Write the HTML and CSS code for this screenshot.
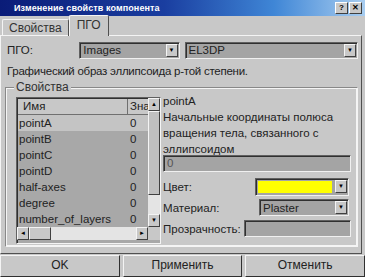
FILE: index.html
```html
<!DOCTYPE html>
<html lang="ru">
  <head>
    <meta charset="UTF-8" />
    <title>Изменение свойств компонента</title>
    <link rel="stylesheet" href="styles.css">
  </head>
  <body>
    <div class="window">
      <div class="titlebar">
        <span class="title">Изменение свойств компонента</span>
        <div class="caption-btns">
          <span class="cap-btn">?</span>
          <span class="cap-btn">✕</span>
        </div>
      </div>

      <div class="tabs">
        <div class="tab">Свойства</div>
        <div class="tab active">ПГО</div>
      </div>

      <div class="panel">
        <div class="pgo-row">
          <span class="pgo-label">ПГО:</span>
          <div class="combo combo-images"><span class="combo-text">Images</span><span class="drop">▼</span></div>
          <div class="combo combo-el"><span class="combo-text">EL3DP</span><span class="drop">▼</span></div>
        </div>
        <div class="desc">Графический образ эллипсоида p-той степени.</div>

        <div class="group">
          <span class="group-label">Свойства</span>
          <div class="group-body">
            <div class="list">
              <div class="list-main">
                <div class="list-cols">
                  <div class="list-head">
                    <span class="col-name">Имя</span>
                    <span class="col-val">Зна</span>
                  </div>
                  <div class="list-row first"><span class="col-name">pointA</span><span class="col-val">0</span></div>
                  <div class="list-row"><span class="col-name">pointB</span><span class="col-val">0</span></div>
                  <div class="list-row"><span class="col-name">pointC</span><span class="col-val">0</span></div>
                  <div class="list-row"><span class="col-name">pointD</span><span class="col-val">0</span></div>
                  <div class="list-row"><span class="col-name">half-axes</span><span class="col-val">0</span></div>
                  <div class="list-row"><span class="col-name">degree</span><span class="col-val">0</span></div>
                  <div class="list-row"><span class="col-name">number_of_layers</span><span class="col-val">0</span></div>
                </div>
                <div class="vscroll">
                  <span class="arrow">▲</span>
                  <span class="vthumb"></span>
                  <span class="vtrack"></span>
                  <span class="arrow">▼</span>
                </div>
              </div>
              <div class="hscroll">
                <span class="arrow">◄</span>
                <span class="hthumb"></span>
                <span class="htrack"></span>
                <span class="arrow">►</span>
                <span class="corner"></span>
              </div>
            </div>

            <div class="details">
              <div class="prop-name">pointA</div>
              <div class="prop-desc">Начальные координаты полюса вращения тела, связанного с эллипсоидом</div>
              <div class="field field-value">0</div>
              <div class="detail-row row-color">
                <span class="detail-label">Цвет:</span>
                <div class="combo combo-color"><span class="swatch"></span><span class="drop">▼</span></div>
              </div>
              <div class="detail-row">
                <span class="detail-label">Материал:</span>
                <div class="combo combo-mat"><span class="combo-text">Plaster</span><span class="drop">▼</span></div>
              </div>
              <div class="detail-row">
                <span class="detail-label">Прозрачность:</span>
                <div class="field field-alpha"></div>
              </div>
            </div>
          </div>
        </div>
      </div>

      <div class="buttons">
        <div class="btn">OK</div>
        <div class="btn">Применить</div>
        <div class="btn">Отменить</div>
      </div>
    </div>
  </body>
</html>
```

FILE: styles.css
```css
html,
body {
  margin: 0;
  padding: 0;
  background: #c8c8c8;
}

.window {
  width: 365px;
  height: 277px;
  background: #c8c8c8;
  font-family: "Liberation Sans", Arial, sans-serif;
  font-size: 11.5px;
  color: #1a1a1a;
  display: flex;
  flex-direction: column;
  overflow: hidden;
}

/* title bar */
.titlebar {
  height: 16px;
  flex: none;
  background: linear-gradient(90deg, #0a1c78 0%, #1a3ea0 45%, #3f86d6 75%, #a8cdf0 100%);
  display: flex;
  align-items: center;
  justify-content: space-between;
  padding: 0 3px 0 14px;
}

.title {
  color: #fff;
  font-weight: bold;
  font-size: 9px;
  letter-spacing: 0.1px;
}

.caption-btns {
  display: flex;
  gap: 1px;
}

.cap-btn {
  width: 11px;
  height: 10px;
  background: #c8c8c8;
  border: 1px solid;
  border-color: #fff #404040 #404040 #fff;
  font-size: 8px;
  font-weight: bold;
  line-height: 10px;
  text-align: center;
  color: #000;
}

/* tabs */
.tabs {
  height: 19px;
  flex: none;
  display: flex;
  align-items: flex-end;
  padding-left: 2px;
  position: relative;
  z-index: 1;
}

.tab {
  height: 16px;
  padding: 0 6px;
  border: 1px solid;
  border-color: #f4f4f4 #505050 transparent #f4f4f4;
  border-bottom: none;
  border-radius: 2px 2px 0 0;
  font-size: 12px;
  line-height: 16px;
  color: #333;
  margin-bottom: -1px;
}

.tab.active {
  height: 20px;
  line-height: 18px;
  padding: 0 7px;
  background: #c8c8c8;
}

/* tab panel */
.panel {
  flex: 1;
  margin: 0 3px 0 0;
  border: 1px solid;
  border-color: #f4f4f4 #505050 #505050 #f4f4f4;
  padding: 5px 3px 0 6px;
  display: flex;
  flex-direction: column;
}

.pgo-row {
  display: flex;
  align-items: center;
  height: 18px;
}

.pgo-label {
  width: 73px;
  color: #222;
}

.combo {
  height: 17px;
  box-sizing: border-box;
  background: #a4a4a4;
  border: 1px solid;
  border-color: #606060 #f0f0f0 #f0f0f0 #606060;
  box-shadow: inset 1px 1px 0 #303030;
  display: flex;
  align-items: center;
}

.combo-text {
  flex: 1;
  padding-left: 3px;
  color: #222;
}

.drop {
  width: 12px;
  height: 13px;
  margin-right: 1px;
  background: #c8c8c8;
  border: 1px solid;
  border-color: #f4f4f4 #404040 #404040 #f4f4f4;
  box-sizing: border-box;
  font-size: 6px;
  line-height: 11px;
  text-align: center;
  color: #000;
}

.combo-images {
  width: 101px;
}

.combo-el {
  width: 175px;
  margin-left: 5px;
}

.desc {
  margin-top: 4px;
  height: 16px;
  line-height: 16px;
  letter-spacing: -0.25px;
  color: #222;
}

/* group box */
.group {
  position: relative;
  margin: 8px 0 0 -2px;
  border: 1px solid;
  border-color: #888 #f4f4f4 #f4f4f4 #888;
  outline: 1px solid #f4f4f4;
  outline-offset: -2px;
  height: 160px;
  padding: 9px 8px 0 10px;
  box-sizing: border-box;
}

.group-label {
  position: absolute;
  top: -8px;
  left: 8px;
  padding: 0 2px;
  background: #c8c8c8;
  font-size: 12px;
  line-height: 14px;
  color: #333;
}

.group-body {
  display: flex;
  gap: 2px;
}

/* list */
.list {
  width: 145px;
  flex: none;
  height: 147px;
  box-sizing: border-box;
  border: 1px solid;
  border-color: #606060 #f4f4f4 #f4f4f4 #606060;
  box-shadow: inset 1px 1px 0 #303030;
  display: flex;
  flex-direction: column;
  background: #a8a8a8;
}

.list-main {
  flex: 1;
  display: flex;
  min-height: 0;
  overflow: hidden;
}

.list-cols {
  flex: 1;
  min-width: 0;
  overflow: hidden;
  padding: 1px 0 0 1px;
}

.list-head {
  height: 15px;
  display: flex;
  background: #c8c8c8;
  border-bottom: 1px solid #707070;
}

.list-head .col-name {
  border-right: 1px solid #707070;
  padding-left: 5px;
  box-sizing: border-box;
}

.list-row {
  height: 16px;
  display: flex;
}

.list-row.first {
  background: #c4c4c4;
}

.col-name {
  width: 110px;
  flex: none;
  padding-left: 1px;
  box-sizing: border-box;
  line-height: 15px;
  white-space: nowrap;
  overflow: hidden;
  color: #222;
}

.list-row .col-name {
  line-height: 16px;
}

.col-val {
  flex: 1;
  min-width: 0;
  padding-left: 2px;
  line-height: 15px;
  overflow: hidden;
  white-space: nowrap;
  color: #222;
}

.list-row .col-val {
  padding-left: 2px;
  line-height: 16px;
}

.vscroll {
  width: 12px;
  flex: none;
  display: flex;
  flex-direction: column;
  background: #e4e4e4;
}

.arrow {
  width: 12px;
  height: 13px;
  box-sizing: border-box;
  background: #c8c8c8;
  border: 1px solid;
  border-color: #f4f4f4 #404040 #404040 #f4f4f4;
  font-size: 6px;
  line-height: 11px;
  text-align: center;
  color: #000;
  flex: none;
}

.vthumb {
  height: 84px;
  flex: none;
  background: #c0c0c0;
  border: 1px solid;
  border-color: #f4f4f4 #404040 #404040 #f4f4f4;
  box-sizing: border-box;
}

.vtrack {
  flex: 1;
}

.hscroll {
  height: 13px;
  flex: none;
  display: flex;
  background: #e4e4e4;
  margin-bottom: 3px;
}

.hthumb {
  width: 22px;
  background: #c8c8c8;
  border: 1px solid;
  border-color: #f4f4f4 #404040 #404040 #f4f4f4;
  box-sizing: border-box;
}

.htrack {
  flex: 1;
}

.corner {
  width: 12px;
  background: #c8c8c8;
}

/* details */
.details {
  flex: 1;
  display: flex;
  flex-direction: column;
  margin-top: -4px;
}

.prop-name {
  height: 16px;
  line-height: 16px;
  color: #222;
}

.prop-desc {
  line-height: 16px;
  width: 172px;
  color: #222;
}

.field {
  height: 17px;
  box-sizing: border-box;
  background: #a4a4a4;
  border: 1px solid;
  border-color: #606060 #f0f0f0 #f0f0f0 #606060;
  box-shadow: inset 1px 1px 0 #303030;
  padding-left: 3px;
  line-height: 15px;
  color: #555;
}

.field-value {
  margin-top: -2px;
  width: 188px;
}

.detail-row {
  display: flex;
  align-items: center;
  justify-content: space-between;
  height: 21px;
  width: 186px;
}

.row-color {
  margin-top: 4px;
}

.detail-label {
  color: #222;
}

.combo-color {
  width: 94px;
  height: 18px;
}

.swatch {
  flex: 1;
  height: 12px;
  margin: 0 3px 0 2px;
  background: #ffff00;
}

.combo-mat {
  width: 90px;
}

.field-alpha {
  width: 107px;
  margin-right: -2px;
}

/* bottom buttons */
.buttons {
  height: 22px;
  flex: none;
  display: flex;
  gap: 3px;
  margin-top: 1px;
}

.btn {
  flex: 1;
  box-sizing: border-box;
  border: 1px solid;
  border-color: #f4f4f4 #303030 #303030 #f4f4f4;
  text-align: center;
  font-size: 12px;
  line-height: 19px;
  color: #222;
}
```
